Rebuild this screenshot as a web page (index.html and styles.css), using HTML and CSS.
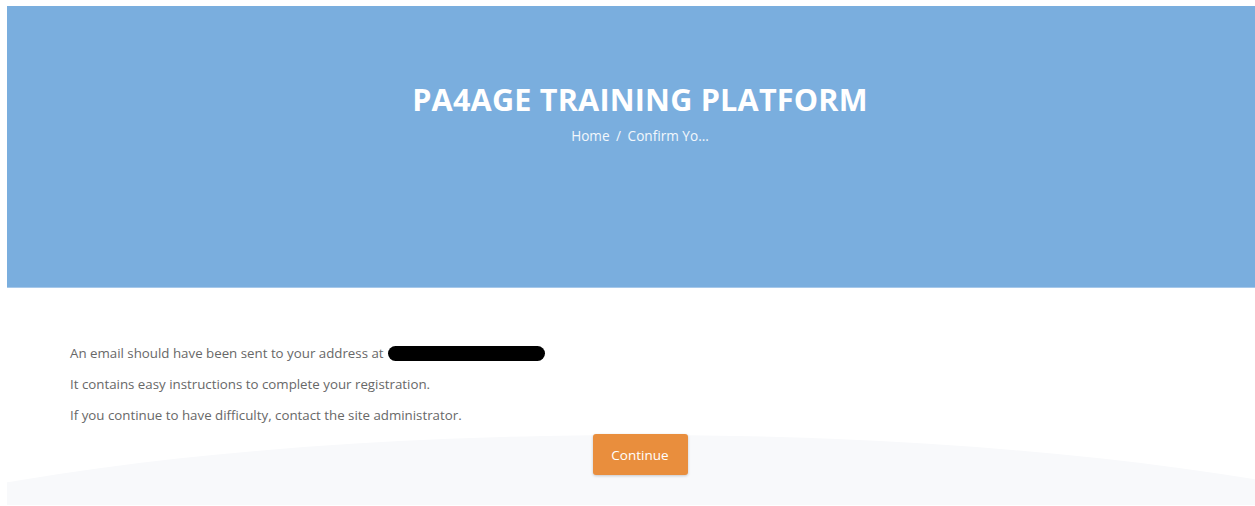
FILE: index.html
```html
<!DOCTYPE html>
<html lang="en">
<head>
<meta charset="utf-8">
<title>PA4AGE Training Platform</title>
<link rel="stylesheet" href="styles.css">
</head>
<body>
<div class="page">
  <header class="hero">
    <h1 class="hero-title">PA4AGE TRAINING PLATFORM</h1>
    <nav class="crumbs">
      <a class="crumb" href="#">Home</a>
      <span class="crumb-sep">/</span>
      <span class="crumb current">Confirm Yo...</span>
    </nav>
  </header>
  <main class="content">
    <div class="wave"></div>
    <div class="notice">
      <p>An email should have been sent to your address at <span class="redacted"></span></p>
      <p>It contains easy instructions to complete your registration.</p>
      <p>If you continue to have difficulty, contact the site administrator.</p>
    </div>
    <div class="actions">
      <button class="btn-continue" type="button">Continue</button>
    </div>
  </main>
</div>
</body>
</html>
```

FILE: styles.css
```css
html, body {
  overflow: hidden;
}

body {
  margin: 6px 0 0 7px;
  background: #ffffff;
  font-family: "Open Sans", "Liberation Sans", sans-serif;
}

.page {
  width: 1266px;
}

/* Blue page header */
.hero {
  background: #7aaede;
  height: 282px;
  box-sizing: border-box;
  padding-top: 75px;
  text-align: center;
  color: #ffffff;
  border-bottom: 1px solid #a6c8ea;
}

.hero-title {
  margin: 0;
  font-size: 30.6px;
  line-height: 36px;
  font-weight: 700;
  letter-spacing: 0.2px;
}

.crumbs {
  margin-top: 9px;
  font-size: 13.6px;
  line-height: 20px;
  color: #f2f7fc;
}

.crumb {
  color: inherit;
  text-decoration: none;
}

.crumb-sep {
  margin: 0 3px;
}

/* Message area */
.content {
  position: relative;
  overflow: hidden;
  height: 217px;
  box-sizing: border-box;
  padding: 50px 0 0 63px;
}

.wave {
  position: absolute;
  left: -347px;
  top: 147px;
  width: 1960px;
  height: 400px;
  border-radius: 50%;
  background: #f8f9fb;
}

.notice {
  position: relative;
  font-size: 13.3px;
  line-height: 31px;
  color: #686868;
}

.notice p {
  margin: 0;
}

.redacted {
  display: inline-block;
  width: 157px;
  height: 15px;
  margin-left: 1px;
  vertical-align: -3px;
  background: #000000;
  border-radius: 8px;
}

.actions {
  position: relative;
  display: flex;
  justify-content: center;
  margin: 3px 0 0 -63px;
}

.btn-continue {
  width: 95px;
  height: 41px;
  border: 0;
  border-radius: 3px;
  background: #e98e3d;
  color: #ffffff;
  font-family: inherit;
  font-size: 13.5px;
  box-shadow: 0 1px 3px rgba(0, 0, 0, 0.2);
  cursor: pointer;
}
```
